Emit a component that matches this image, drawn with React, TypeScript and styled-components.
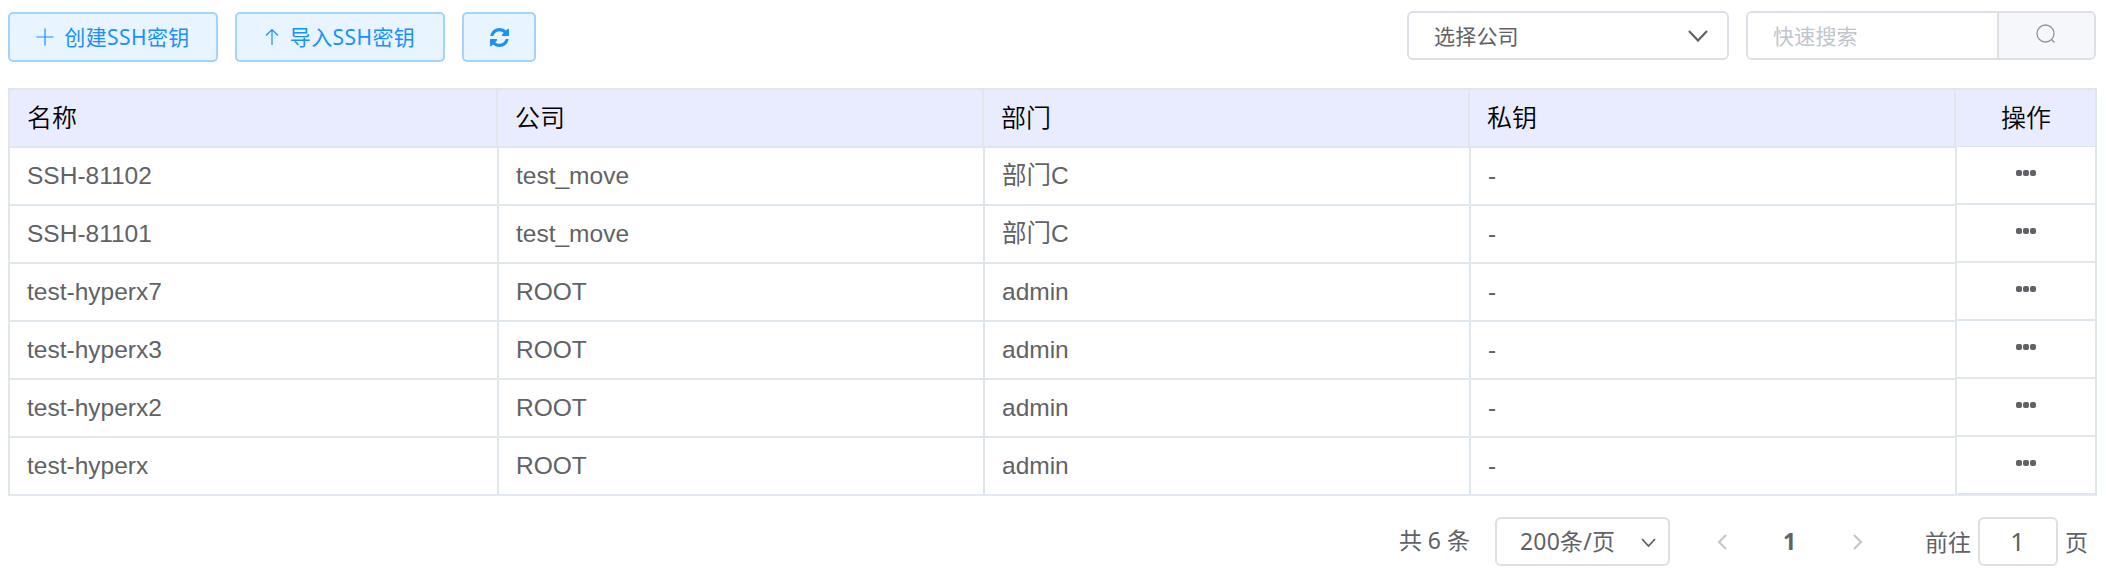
import React from "react";
import styled, { createGlobalStyle } from "styled-components";

const ui = '"Noto Sans", "Noto Sans CJK SC", sans-serif';

const Global = createGlobalStyle`
  *{box-sizing:border-box}
  body{margin:0;background:#fff;color:#606266;font-family:${ui}}
`;
const Page = styled.main`width:2106px;height:575px;padding:11px 9px 0 8px;overflow:hidden;`;
const Toolbar = styled.div`display:flex;justify-content:space-between;align-items:flex-start;height:77px;padding-right:1px;`;
const Group = styled.div<{ $gap: number; $top?: number }>`display:flex;gap:${p => p.$gap}px;padding-top:${p => p.$top ?? 0}px;`;
const Button = styled.button<{ $w: number; $gap: number }>`
  width:${p => p.$w}px;height:50px;padding:0;border:2px solid #a3d3ff;border-radius:5px;background:#e8f4ff;color:#1890ff;
  display:flex;align-items:center;justify-content:center;gap:${p => p.$gap}px;
  font:400 21px/24px ${ui};letter-spacing:0.4px;white-space:nowrap;
`;
const Select = styled.div<{ $w: number; $h: number; $size: number; $pl: number; $pr: number; $pb?: number }>`
  width:${p => p.$w}px;height:${p => p.$h}px;border:2px solid #dcdfe6;border-radius:6px;
  display:flex;align-items:center;justify-content:space-between;padding:0 ${p => p.$pr}px ${p => p.$pb ?? 0}px ${p => p.$pl}px;
  font-size:${p => p.$size}px;font-weight:400;line-height:28px;letter-spacing:0.2px;white-space:nowrap;
`;
const Search = styled.div`
  width:350px;height:49px;border:2px solid #dcdfe6;border-radius:6px;display:flex;overflow:hidden;
  input{width:249px;border:0;padding:0 0 0 25px;font:400 21px ${ui};letter-spacing:0.2px;color:#606266;outline:0}
  input::placeholder{color:#c0c4cc;opacity:1}
`;
const SearchButton = styled.button`flex:1;border:0;border-left:2px solid #dcdfe6;background:#f5f7fa;padding:0 2px 3px 0;color:#909399;display:flex;align-items:center;justify-content:center;`;
const Table = styled.div`display:flex;width:2089px;height:408px;border:2px solid #dfe6ec;border-bottom-color:#e3e9f3;`;
const Main = styled.div`width:1947px;`;
const Actions = styled.div`width:138px;`;
const Head = styled.div<{ $fixed?: boolean }>`
  display:grid;grid-template-columns:${p => p.$fixed ? "138px" : "488px 486px 486px 486px"};
  height:${p => p.$fixed ? 57 : 58}px;border-bottom:${p => p.$fixed ? 1 : 2}px solid #dfe6ec;background:#e9ecfe;
`;
const HeadCell = styled.div<{ $center?: boolean }>`
  border-right:${p => p.$center ? 0 : 2}px solid #dfe6ec;padding-left:${p => p.$center ? 0 : 17}px;
  text-align:${p => p.$center ? "center" : "left"};color:#000;font:350 25px/53px "Noto Sans CJK SC",sans-serif;
`;
const Row = styled.div`display:grid;grid-template-columns:489px 486px 486px 486px;height:58px;border-bottom:2px solid #dfe6ec;&:last-child{height:56px;border:0}`;
const Cell = styled.div`border-right:2px solid #dfe6ec;padding-left:17px;font:24.5px/55px "Liberation Sans","Noto Sans CJK SC",sans-serif;`;
const ActionCell = styled.button`
  display:flex;width:138px;height:58px;border:0;border-bottom:2px solid #dfe6ec;background:#fff;align-items:center;justify-content:center;
  padding:0 0 4px;color:#606266;&:last-child{height:57px;border-bottom-width:1px}
`;
const Footer = styled.nav`display:flex;justify-content:flex-end;padding:21px 9px 0 0;`;
const Total = styled.span`font-size:23px;font-weight:400;line-height:46px;margin-right:25px;white-space:nowrap;`;
const Pager = styled.div`display:flex;align-items:center;height:49px;margin:0 62px 0 47px;color:#c0c4cc;`;
const Current = styled.b`width:14px;margin:0 56px;color:#606266;font-size:23px;line-height:44px;padding-bottom:2px;`;
const Jump = styled.label`display:flex;align-items:center;height:49px;font-size:23px;gap:7px;white-space:nowrap;
  span{padding-top:1px;line-height:44px}
  input{width:80px;height:49px;border:2px solid #dcdfe6;border-radius:6px;text-align:center;font:400 25px ${ui};color:#606266;padding:0 1px 2px 0}
`;
const Stroke = ({ d, w, h, s = 1.5 }: { d: string; w: number; h: number; s?: number }) => (
  <svg width={w} height={h} viewBox={`0 0 ${w} ${h}`} fill="none" stroke="currentColor" strokeWidth={s}><path d={d} /></svg>
);
const rows = [
  ["SSH-81102", "test_move", "部门C"], ["SSH-81101", "test_move", "部门C"],
  ["test-hyperx7", "ROOT", "admin"], ["test-hyperx3", "ROOT", "admin"],
  ["test-hyperx2", "ROOT", "admin"], ["test-hyperx", "ROOT", "admin"],
];

export default function App() {
  return <><Global /><Page>
    <Toolbar>
      <Group $gap={17} $top={1}>
        <Button $w={210} $gap={10}><Stroke w={18} h={18} s={1.2} d="M9 0.5V17.5M0.5 9H17.5" />创建SSH密钥</Button>
        <Button $w={210} $gap={11}><Stroke w={14} h={18} s={1.2} d="M7 17V1.5M1 7.5L7 1.5L13 7.5" />导入SSH密钥</Button>
        <Button $w={74} $gap={0} aria-label="刷新">
          <svg width="19" height="19" viewBox="0 0 1536 1536" fill="currentColor"><path d="M1511 928q0 5-1 7-64 268-268 434.500T764 1536q-146 0-282.500-55T238 1324l-129 129q-19 19-45 19t-45-19-19-45V960q0-26 19-45t45-19h448q26 0 45 19t19 45-19 45l-137 137q71 66 161 102t187 36q134 0 250-65t186-179q11-17 53-117 8-23 30-23h192q13 0 22.500 9.500t9.500 22.500zM1536 128v448q0 26-19 45t-45 19h-448q-26 0-45-19t-19-45 19-45l138-138Q969 256 768 256q-134 0-250 65T332 500q-11 17-53 117-8 23-30 23H50q-13 0-22.500-9.500T18 608v-7q65-268 270-434.500T768 0q146 0 284 55.500T1297 212l130-129q19-19 45-19t45 19 19 45z"/></svg>
        </Button>
      </Group>
      <Group $gap={17}>
        <Select $w={322} $h={49} $size={21} $pl={25} $pr={19}>选择公司<Stroke w={20} h={12} s={2.2} d="M1 1L10 10.500L19 1" /></Select>
        <Search><input placeholder="快速搜索" /><SearchButton aria-label="搜索"><svg width="20" height="20" viewBox="0 0 20 20" fill="none" stroke="currentColor" strokeWidth="1.300"><circle cx="9.500" cy="9.500" r="8.500"/><path d="M15.500 15.500L18.500 18.500"/></svg></SearchButton></Search>
      </Group>
    </Toolbar>
    <Table>
      <Main>
        <Head>{["名称", "公司", "部门", "私钥"].map(t => <HeadCell key={t}>{t}</HeadCell>)}</Head>
        {rows.map(r => <Row key={r[0]}>{[...r, "-"].map((t, i) => <Cell key={i}>{t}</Cell>)}</Row>)}
      </Main>
      <Actions>
        <Head $fixed><HeadCell $center>操作</HeadCell></Head>
        {rows.map(r => <ActionCell key={r[0]} aria-label="操作"><svg width="20" height="6" fill="currentColor"><rect width="6" height="6" rx="2"/><rect x="7" width="6" height="6" rx="2"/><rect x="14" width="6" height="6" rx="2"/></svg></ActionCell>)}
      </Actions>
    </Table>
    <Footer>
      <Total>共 6 条</Total>
      <Select $w={175} $h={49} $size={23} $pl={23} $pr={12} $pb={2}>200条/页<Stroke w={15} h={13} s={1.8} d="M1 5L7.500 12L14 5" /></Select>
      <Pager><Stroke w={10} h={16} s={2} d="M9 1L2 8L9 15" /><Current>1</Current><Stroke w={10} h={16} s={2} d="M1 1L8 8L1 15" /></Pager>
      <Jump><span>前往</span><input defaultValue="1" /><span>页</span></Jump>
    </Footer>
  </Page></>;
}
